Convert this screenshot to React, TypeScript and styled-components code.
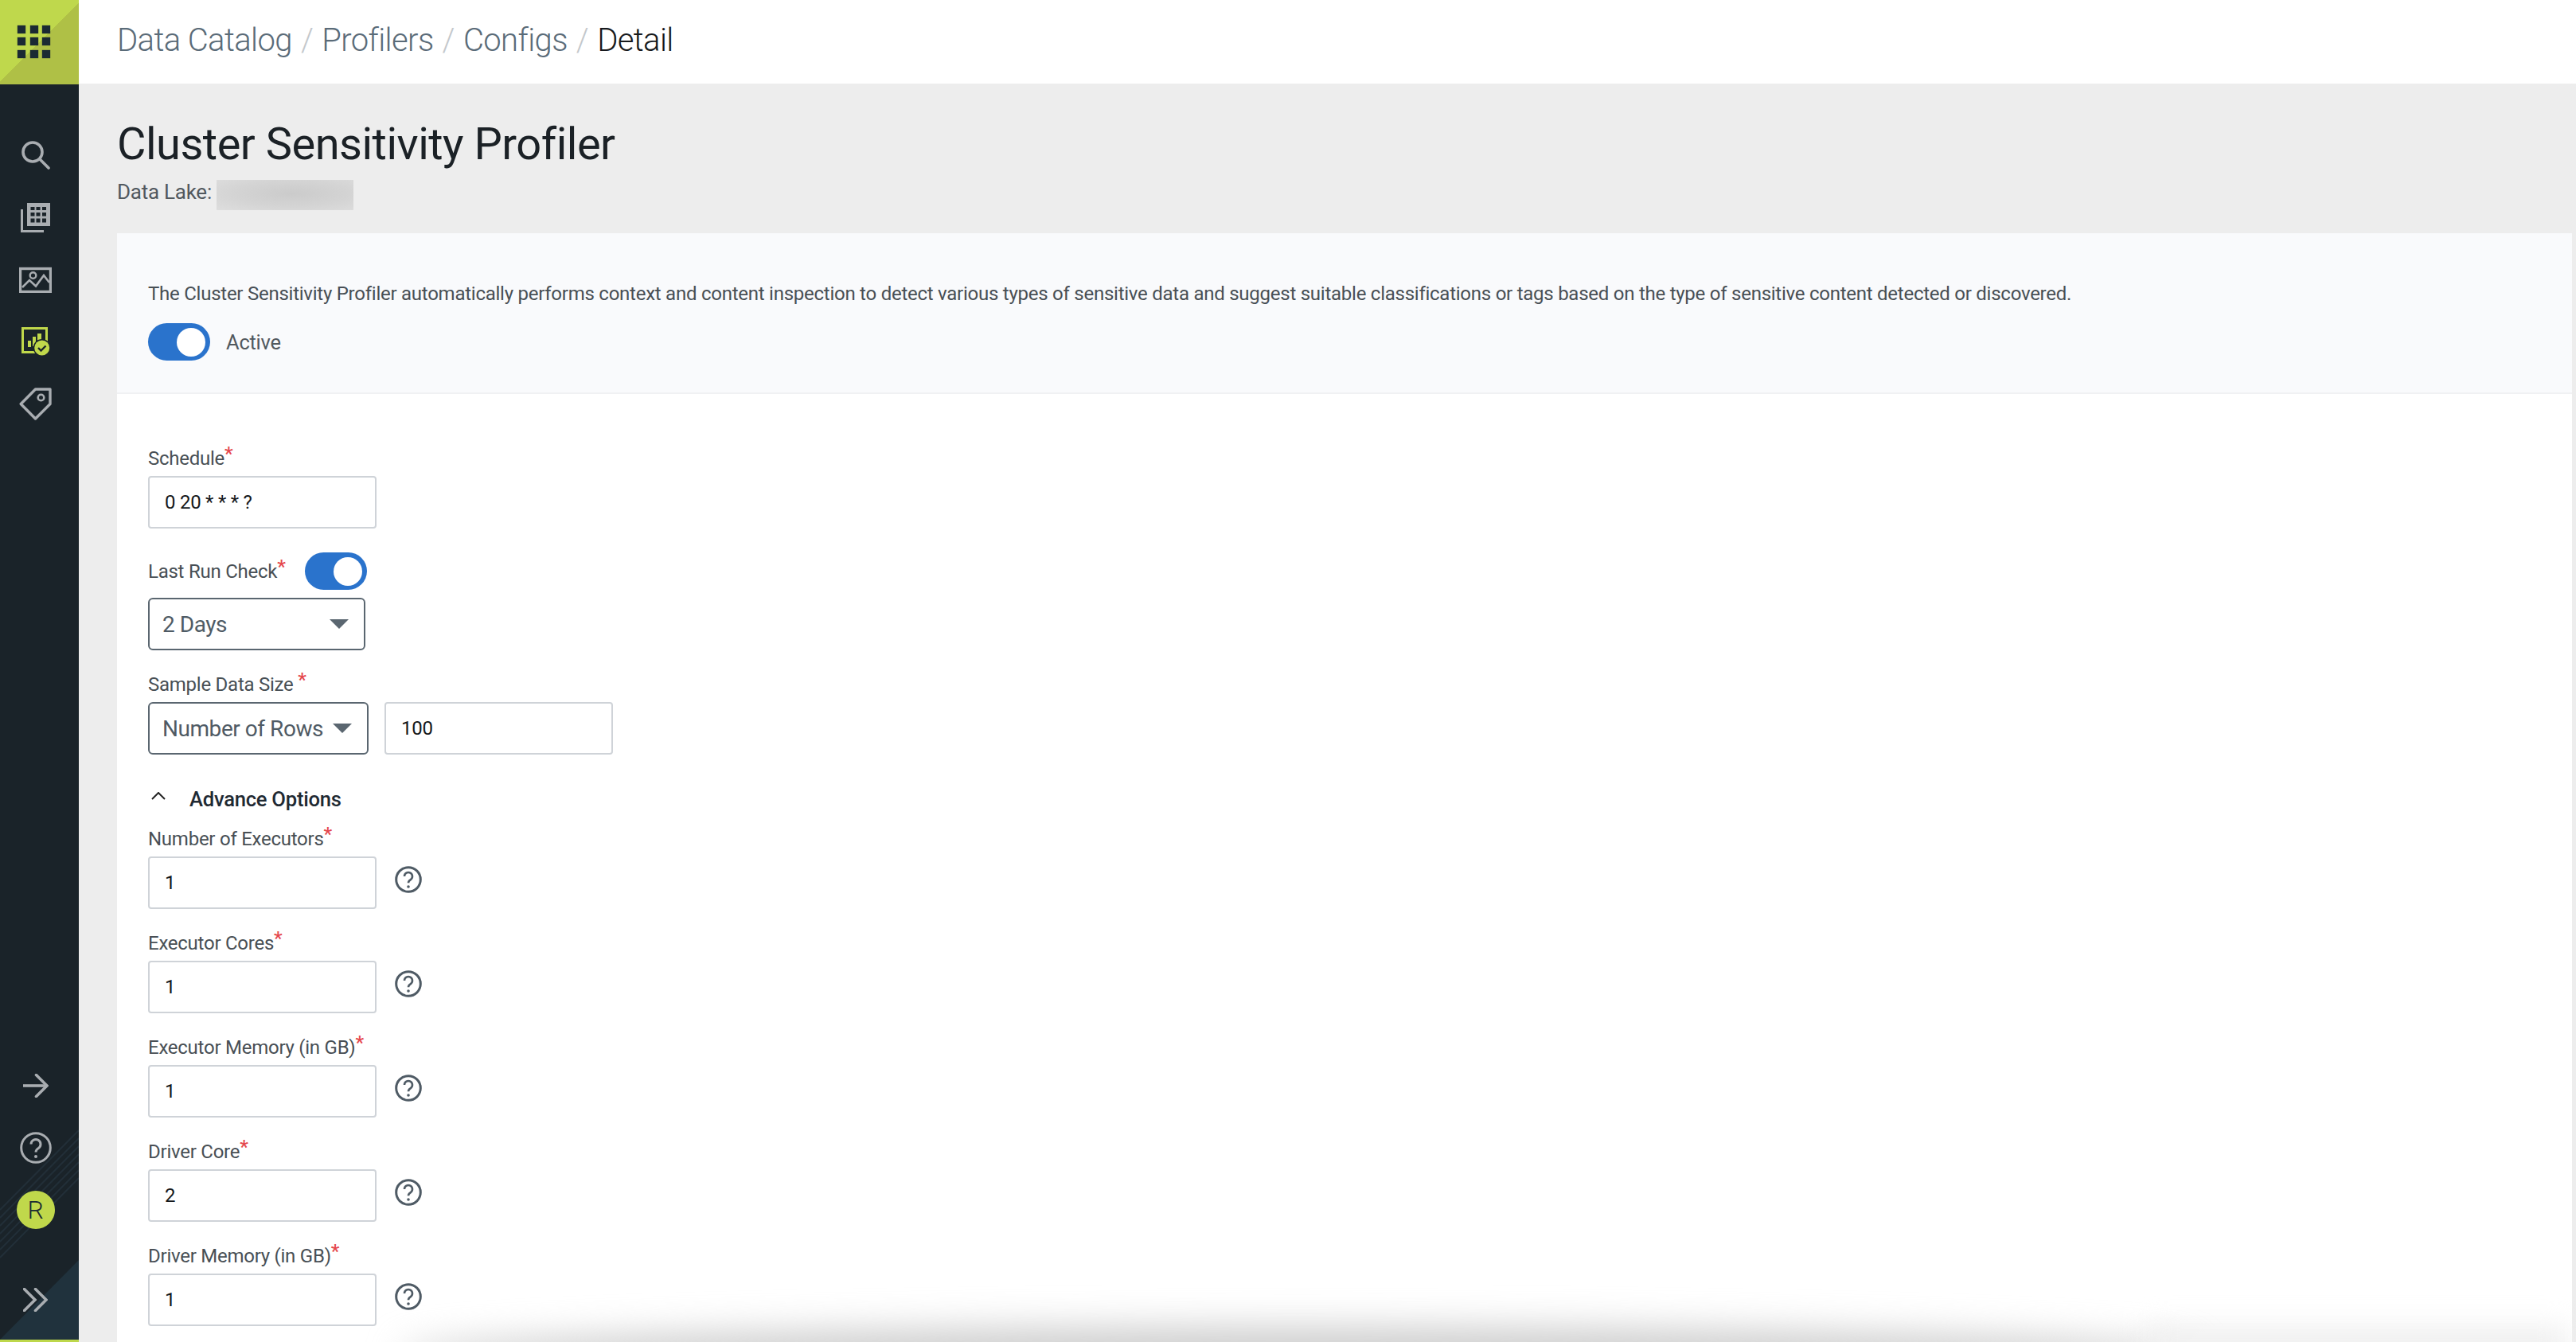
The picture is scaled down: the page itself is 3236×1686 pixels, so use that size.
import React from "react";
import styled, { createGlobalStyle } from "styled-components";

const GlobalStyle = createGlobalStyle`
  html, body {
    margin: 0;
    padding: 0;
    height: 100%;
    overflow: hidden;
    background: #ededed;
    font-family: Roboto, "Liberation Sans", sans-serif;
    letter-spacing: -0.25px;
  }
`;

const Page = styled.div`
  display: flex;
  width: 3236px;
  height: 1686px;
  overflow: hidden;
  position: relative;
`;

const Sidebar = styled.aside`
  position: relative;
  flex: 0 0 99px;
  display: flex;
  flex-direction: column;
  background: #1a2329;
  border-bottom: 3px solid #bdd74b;
  box-sizing: border-box;
`;

const Logo = styled.div`
  height: 106px;
  margin-bottom: 1px;
  display: flex;
  align-items: center;
  justify-content: center;
  position: relative;
  z-index: 1;
  background: linear-gradient(135deg, #bfd84c 0%, #bfd84c 50%, #afc046 50%, #afc046 100%);
`;

const LogoGrid = styled.div`
  display: grid;
  grid-template-columns: repeat(3, 10px);
  grid-auto-rows: 10px;
  gap: 5.5px;
  transform: translate(-7px, -1px);

  & span {
    background: #1b2a33;
    box-shadow: 0 0 1px #1b2a33;
  }
`;

const NavList = styled.nav`
  padding-top: 49px;
  position: relative;
  z-index: 1;
`;

const NavFoot = styled.div`
  margin-top: auto;
  padding-bottom: 11px;
  position: relative;
  z-index: 1;
`;

const NavSlot = styled.div<{ $gap?: number }>`
  height: 78px;
  margin-top: ${(p) => p.$gap ?? 0}px;
  padding-right: 10px;
  display: flex;
  align-items: center;
  justify-content: center;
  color: #a9adb1;
`;

const Avatar = styled.div`
  width: 48px;
  height: 48px;
  border-radius: 50%;
  background: #c0d84b;
  color: #1b2a33;
  display: flex;
  align-items: center;
  justify-content: center;
  font-size: 32px;
  font-weight: 300;
`;

const SideArt = styled.svg`
  position: absolute;
  left: 0;
  bottom: 0;
  width: 99px;
  height: 270px;
`;

const Main = styled.main`
  flex: 1;
  min-width: 0;
  display: flex;
  flex-direction: column;
  background: #ededed;
`;

const Topbar = styled.header`
  height: 105px;
  flex: none;
  background: #ffffff;
  display: flex;
  align-items: center;
  padding: 0 0 4px 48px;
  box-sizing: border-box;
  font-size: 40px;
  font-weight: 300;
  letter-spacing: -0.6px;
  color: #5a6b78;
`;

const Crumb = styled.span<{ $current?: boolean }>`
  color: ${(p) => (p.$current ? "#16191c" : "#5a6b78")};
`;

const Slash = styled.span`
  color: #c4c8cc;
  margin: 0 11px;
`;

const PageHead = styled.div`
  height: 188px;
  flex: none;
  padding: 43px 0 0 48px;
  box-sizing: border-box;
`;

const Title = styled.h1`
  margin: 0;
  font-size: 56px;
  font-weight: 400;
  line-height: 66px;
  letter-spacing: -0.5px;
  color: #1b2126;
`;

const LakeRow = styled.div`
  display: flex;
  align-items: center;
  font-size: 26px;
  color: #51585e;
  margin-top: 8px;
  height: 38px;
`;

const BlurredName = styled.div`
  width: 172px;
  height: 38px;
  margin: 8px 0 0 6px;
  background: radial-gradient(ellipse at 55% 45%, #cbcbcb 0%, #d4d4d4 55%, #dedede 100%);
`;

const Card = styled.section`
  flex: 1;
  margin: 0 5px 0 48px;
  background: #ffffff;
`;

const Intro = styled.div`
  height: 202px;
  padding: 61px 0 0 39px;
  box-sizing: border-box;
  background: #f9fafc;
  border-bottom: 2px solid #f0f1f3;
`;

const IntroText = styled.p`
  margin: 0;
  font-size: 24px;
  line-height: 30px;
  color: #484f55;
`;

const ActiveRow = styled.div`
  display: flex;
  align-items: center;
  gap: 20px;
  margin-top: 22px;
  font-size: 25.5px;
  color: #51585e;
`;

const Toggle = styled.div`
  width: 78px;
  height: 47px;
  border-radius: 24px;
  background: #2a73cc;
  display: flex;
  align-items: center;
  justify-content: flex-end;
  padding-right: 6px;
  box-sizing: border-box;

  &::after {
    content: "";
    width: 36px;
    height: 36px;
    border-radius: 50%;
    background: #ffffff;
  }
`;

const Form = styled.form`
  padding: 66px 0 0 39px;
`;

const Label = styled.div`
  height: 30px;
  line-height: 31px;
  font-size: 24px;
  color: #484f55;
`;

const Star = styled.sup`
  color: #e5484d;
  font-size: 24px;
  font-weight: 500;
  line-height: 0;
  vertical-align: baseline;
  position: relative;
  top: -6px;
`;

const FieldLabel = styled(Label)`
  margin-bottom: 7px;
`;

const InputBox = styled.div`
  width: 287px;
  height: 66px;
  box-sizing: border-box;
  border: 2px solid #cfd3d8;
  border-radius: 4px;
  padding-left: 19px;
  display: flex;
  align-items: center;
  font-size: 24px;
  color: #15181b;
  background: #ffffff;
`;

const SelectBox = styled.div<{ $width: number }>`
  width: ${(p) => p.$width}px;
  height: 66px;
  box-sizing: border-box;
  border: 2px solid #5a6670;
  border-radius: 6px;
  padding: 0 19px 0 16px;
  display: flex;
  align-items: center;
  justify-content: space-between;
  font-size: 28px;
  letter-spacing: -0.45px;
  color: #4f5b65;
  background: #ffffff;

  &::after {
    content: "";
    border-left: 12px solid transparent;
    border-right: 12px solid transparent;
    border-top: 12px solid #5a6670;
  }
`;

const LastRunRow = styled.div`
  display: flex;
  align-items: center;
  gap: 24px;
  margin-top: 30px;
  margin-bottom: 10px;
`;

const SampleRow = styled.div`
  display: flex;
  gap: 20px;
`;

const SampleLabel = styled(FieldLabel)`
  margin-top: 28px;
`;

const AdvanceHead = styled.div`
  display: flex;
  align-items: center;
  height: 30px;
  margin: 41px 0 20px;
  font-size: 25.6px;
  font-weight: 500;
  color: #1f2a33;
`;

const AdvanceChevron = styled.svg`
  width: 18px;
  height: 10px;
  margin: 0 30px 0 4px;
  transform: translateY(-4px);
`;

const OptionField = styled.div`
  margin-bottom: 28px;
`;

const OptionRow = styled.div`
  display: flex;
  align-items: center;
  gap: 23px;
`;

const HelpIcon = styled.svg`
  width: 34px;
  height: 34px;
  margin-bottom: 8px;
  color: #4f5b65;
`;

const BottomFade = styled.div`
  position: absolute;
  left: 500px;
  width: 2260px;
  bottom: -50px;
  height: 70px;
  border-radius: 50%;
  background: #cfcfcf;
  filter: blur(22px);
`;

const BottomFadeRight = styled.div`
  position: absolute;
  left: 2700px;
  right: 10px;
  bottom: -30px;
  height: 50px;
  background: #f0f0f0;
  filter: blur(16px);
`;

const IconSearch = () => (
  <svg width="36" height="36" viewBox="0 0 36 36" fill="none" stroke="currentColor">
    <circle cx="14" cy="14" r="12" strokeWidth="3.6" />
    <path d="M23 23l11 11" strokeWidth="3.6" strokeLinecap="round" />
  </svg>
);

const IconTables = () => (
  <svg width="37" height="37" viewBox="0 0 37 37" fill="none">
    <rect x="8" y="0" width="29" height="29" fill="currentColor" />
    <g fill="#1a2329">
      <rect x="12.5" y="5" width="5" height="4" />
      <rect x="19.5" y="5" width="5" height="4" />
      <rect x="27" y="5" width="5" height="4" />
      <rect x="12.5" y="12" width="5" height="4.5" />
      <rect x="19.5" y="12" width="5" height="4.5" />
      <rect x="27" y="12" width="5" height="4.5" />
      <rect x="12.5" y="19.5" width="5" height="5" />
      <rect x="19.5" y="19.5" width="5" height="5" />
      <rect x="27" y="19.5" width="5" height="5" />
    </g>
    <path d="M1.5 8v27.5H29" stroke="currentColor" strokeWidth="3" />
  </svg>
);

const IconImage = () => (
  <svg width="41" height="33" viewBox="0 0 41 33" fill="none" stroke="currentColor">
    <rect x="1.5" y="2.5" width="38" height="29" strokeWidth="3.4" />
    <circle cx="17.5" cy="11" r="3.8" strokeWidth="2.4" />
    <path d="M4 26l9-9 8 7.5L31 11l7 9" strokeWidth="2.6" />
  </svg>
);

const IconChart = () => (
  <svg width="36" height="37" viewBox="0 0 36 37" fill="none">
    <rect x="1.5" y="1.5" width="30" height="30" stroke="#c0d84b" strokeWidth="3" />
    <g fill="#c0d84b">
      <rect x="8" y="17" width="4" height="8" />
      <rect x="14" y="12" width="4" height="12" />
      <rect x="20" y="8" width="5" height="12" />
    </g>
    <circle cx="25.7" cy="26" r="11" fill="#1a2329" />
    <circle cx="25.7" cy="26" r="9.5" fill="#c0d84b" />
    <path d="M21 26l3.5 3.5 6-6" stroke="#1a2329" strokeWidth="2.4" />
  </svg>
);

const IconTag = () => (
  <svg width="41" height="41" viewBox="0 0 41 41" fill="none" stroke="currentColor">
    <path d="M2.2 20.5L20.5 2H39v18.5L20.5 39z" strokeWidth="3.4" strokeLinejoin="round" />
    <circle cx="27.5" cy="12.5" r="3.8" strokeWidth="2.6" />
  </svg>
);

const IconArrow = () => (
  <svg width="32" height="30" viewBox="0 0 32 30" fill="none" stroke="currentColor" strokeWidth="3.6">
    <path d="M0 15h29" />
    <path d="M16.5 1.5L30 15 16.5 28.5" strokeLinecap="round" />
  </svg>
);

const IconHelpRound = () => (
  <svg width="40" height="40" viewBox="0 0 40 40" fill="none" stroke="currentColor">
    <circle cx="20" cy="20" r="18.3" strokeWidth="3" />
    <path d="M14 15.5a6 6 0 1 1 9 5.2c-2 1.2-3 2.4-3 4.8" strokeWidth="3" />
    <circle cx="20" cy="31" r="2" fill="currentColor" stroke="none" />
  </svg>
);

const IconDouble = () => (
  <svg width="31" height="30" viewBox="0 0 31 30" fill="none" stroke="currentColor" strokeWidth="3.6">
    <path d="M1.5 1.5L15 15 1.5 28.5" strokeLinecap="round" />
    <path d="M15.5 1.5L29 15 15.5 28.5" strokeLinecap="round" />
  </svg>
);

const HelpMark = () => (
  <HelpIcon viewBox="0 0 34 34" fill="none" stroke="currentColor">
    <circle cx="17" cy="17" r="15.3" strokeWidth="3" />
    <path d="M12 13a5 5 0 1 1 7.6 4.3c-1.7 1-2.6 2-2.6 4" strokeWidth="2.6" />
    <circle cx="17" cy="26" r="1.8" fill="currentColor" stroke="none" />
  </HelpIcon>
);

const options = [
  { label: "Number of Executors", value: "1" },
  { label: "Executor Cores", value: "1" },
  { label: "Executor Memory (in GB)", value: "1" },
  { label: "Driver Core", value: "2" },
  { label: "Driver Memory (in GB)", value: "1" },
];

const App: React.FC = () => {
  return (
    <Page>
      <GlobalStyle />
      <Sidebar>
        <SideArt viewBox="0 0 99 270" fill="none">
          <g stroke="#222f38" strokeWidth="2">
            <path d="M0 107L99 7" />
            <path d="M0 117L99 17" />
            <path d="M0 127L99 27" />
            <path d="M0 137L99 37" />
            <path d="M0 147L99 47" />
            <path d="M0 157L99 57" />
            <path d="M0 167L99 67" />
          </g>
          <path d="M0 270L99 170V270z" fill="#20323d" />
        </SideArt>
        <Logo>
          <LogoGrid>
            {Array.from({ length: 9 }).map((_, i) => (
              <span key={i} />
            ))}
          </LogoGrid>
        </Logo>
        <NavList>
          <NavSlot><IconSearch /></NavSlot>
          <NavSlot><IconTables /></NavSlot>
          <NavSlot><IconImage /></NavSlot>
          <NavSlot><IconChart /></NavSlot>
          <NavSlot><IconTag /></NavSlot>
        </NavList>
        <NavFoot>
          <NavSlot><IconArrow /></NavSlot>
          <NavSlot><IconHelpRound /></NavSlot>
          <NavSlot><Avatar>R</Avatar></NavSlot>
          <NavSlot $gap={35}><IconDouble /></NavSlot>
        </NavFoot>
      </Sidebar>

      <Main>
        <Topbar>
          <Crumb>Data Catalog</Crumb>
          <Slash>/</Slash>
          <Crumb>Profilers</Crumb>
          <Slash>/</Slash>
          <Crumb>Configs</Crumb>
          <Slash>/</Slash>
          <Crumb $current>Detail</Crumb>
        </Topbar>

        <PageHead>
          <Title>Cluster Sensitivity Profiler</Title>
          <LakeRow>
            Data Lake:
            <BlurredName />
          </LakeRow>
        </PageHead>

        <Card>
          <Intro>
            <IntroText>
              The Cluster Sensitivity Profiler automatically performs context and content inspection to detect various types of sensitive data and suggest suitable classifications or tags based on the type of sensitive content detected or discovered.
            </IntroText>
            <ActiveRow>
              <Toggle />
              Active
            </ActiveRow>
          </Intro>

          <Form>
            <FieldLabel>Schedule<Star>*</Star></FieldLabel>
            <InputBox>0 20 * * * ?</InputBox>

            <LastRunRow>
              <Label>Last Run Check<Star>*</Star></Label>
              <Toggle />
            </LastRunRow>
            <SelectBox $width={273}>2 Days</SelectBox>

            <SampleLabel>Sample Data Size <Star>*</Star></SampleLabel>
            <SampleRow>
              <SelectBox $width={277}>Number of Rows</SelectBox>
              <InputBox>100</InputBox>
            </SampleRow>

            <AdvanceHead>
              <AdvanceChevron viewBox="0 0 18 10" fill="none" stroke="#222" strokeWidth="2">
                <path d="M1 9l8-8 8 8" />
              </AdvanceChevron>
              Advance Options
            </AdvanceHead>

            {options.map((opt) => (
              <OptionField key={opt.label}>
                <FieldLabel>{opt.label}<Star>*</Star></FieldLabel>
                <OptionRow>
                  <InputBox>{opt.value}</InputBox>
                  <HelpMark />
                </OptionRow>
              </OptionField>
            ))}
          </Form>
        </Card>
      </Main>
      <BottomFade />
      <BottomFadeRight />
    </Page>
  );
};

export default App;
